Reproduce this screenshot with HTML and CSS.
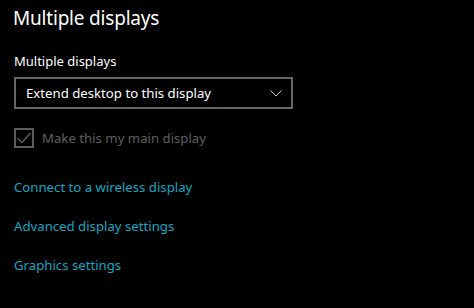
FILE: index.html
```html
<!DOCTYPE html>
<html lang="en">
<head>
    <meta charset="UTF-8">
    <meta name="viewport" content="width=device-width, initial-scale=1.0">
    <title>Multiple displays</title>
    <link rel="stylesheet" href="styles.css">
</head>
<body>
    <div class="panel">
        <h2 class="title">Multiple displays</h2>
        <div class="field-label">Multiple displays</div>
        <div class="dropdown">
            <span class="dropdown-text">Extend desktop to this display</span>
            <svg class="chevron" width="12" height="7" viewBox="0 0 12 7">
                <path d="M0.5 0.5 L6 6 L11.5 0.5" fill="none" stroke="#c8c8c8" stroke-width="1"/>
            </svg>
        </div>
        <label class="check-row">
            <span class="check-box">
                <svg width="16" height="16" viewBox="0 0 16 16">
                    <path d="M1.5 8 L6 12.5 L14.5 3" fill="none" stroke="#5d5d5d" stroke-width="1.3"/>
                </svg>
            </span>
            <span class="check-text">Make this my main display</span>
        </label>
        <div class="links">
            <a href="#" class="link">Connect to a wireless display</a>
            <a href="#" class="link">Advanced display settings</a>
            <a href="#" class="link">Graphics settings</a>
        </div>
    </div>
</body>
</html>
```

FILE: styles.css
```css
body {
    margin: 0;
    background-color: #000;
    font-family: "Noto Sans", "Open Sans", sans-serif;
    color: #fff;
}
.panel {
    padding: 4px 0 0 14px;
}
.title {
    margin: 0 0 0 -1px;
    font-size: 19px;
    font-weight: normal;
    line-height: 28px;
    letter-spacing: -0.2px;
}
.field-label {
    margin-top: 20px;
    font-size: 13px;
    line-height: 18px;
}
.dropdown {
    margin-top: 7px;
    width: 256px;
    height: 28px;
    border: 2px solid #666;
    display: flex;
    align-items: center;
    justify-content: space-between;
    padding: 0 9px 0 10px;
}
.dropdown-text {
    font-size: 13.2px;
}
.chevron {
    display: block;
}
.check-row {
    margin-top: 19px;
    display: flex;
    align-items: center;
    gap: 8px;
}
.check-box {
    width: 16px;
    height: 16px;
    border: 2px solid #5d5d5d;
    display: block;
}
.check-box svg {
    display: block;
}
.check-text {
    font-size: 13.2px;
    color: #5f5f5f;
}
.links {
    margin-top: 30px;
    display: flex;
    flex-direction: column;
    gap: 20px;
}
.link {
    color: #14a6c1;
    text-decoration: none;
    font-size: 13.2px;
    line-height: 19px;
}
```
